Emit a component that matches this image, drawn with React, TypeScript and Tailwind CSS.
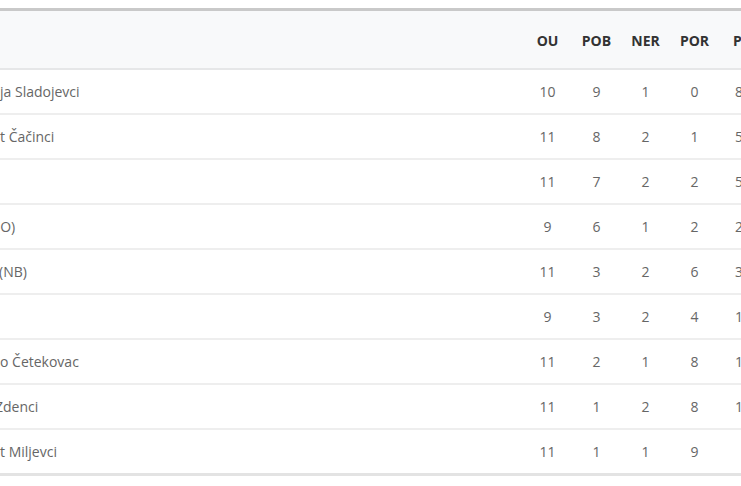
import React from "react";

const rows = [
  { name: "ja Sladojevci", shift: "", ou: 10, pob: 9, ner: 1, por: 0, p: "8" },
  { name: "t Čačinci", shift: "", ou: 11, pob: 8, ner: 2, por: 1, p: "5" },
  { name: "", shift: "", ou: 11, pob: 7, ner: 2, por: 2, p: "5" },
  { name: "(O)", shift: "ml-[-4px]", ou: 9, pob: 6, ner: 1, por: 2, p: "2" },
  { name: "(NB)", shift: "ml-[-1px]", ou: 11, pob: 3, ner: 2, por: 6, p: "3" },
  { name: "", shift: "", ou: 9, pob: 3, ner: 2, por: 4, p: "1" },
  { name: "o Četekovac", shift: "", ou: 11, pob: 2, ner: 1, por: 8, p: "1" },
  { name: "Zdenci", shift: "ml-[-5px]", ou: 11, pob: 1, ner: 2, por: 8, p: "1" },
  { name: "t Miljevci", shift: "", ou: 11, pob: 1, ner: 1, por: 9, p: "" },
];

export default function App() {
  return (
    <div className="w-[741px] h-[486px] overflow-hidden bg-white pt-[8px] font-['Open_Sans',sans-serif] text-[14px]">
      <div className="w-[790px] border-t-[3px] border-[#c9c9c9]">
        <div className="flex items-center h-[59px] pt-[2px] bg-[#f8f9fa] border-b-2 border-[#e6e7e8] font-bold text-[#333]">
          <div className="w-[523px]" />
          <div className="w-[49px] text-center">OU</div>
          <div className="w-[49px] text-center">POB</div>
          <div className="w-[49px] text-center">NER</div>
          <div className="w-[49px] text-center">POR</div>
          <div className="pl-[14px]">PG</div>
        </div>
        {rows.map((r, i) => (
          <div
            key={i}
            className={`flex items-center text-[#666] ${i === rows.length - 1 ? "h-[46px] border-b-[3px] border-[#e3e3e3]" : "h-[45px] border-b-2 border-[#eeeeee]"}`}
          >
            <div className="w-[523px] overflow-hidden whitespace-nowrap">
              <span className={`inline-block ${r.shift}`}>{r.name}</span>
            </div>
            <div className="w-[49px] text-center">{r.ou}</div>
            <div className="w-[49px] text-center">{r.pob}</div>
            <div className="w-[49px] text-center">{r.ner}</div>
            <div className="w-[49px] text-center">{r.por}</div>
            <div className="pl-[16px]">{r.p}</div>
          </div>
        ))}
      </div>
    </div>
  );
}
